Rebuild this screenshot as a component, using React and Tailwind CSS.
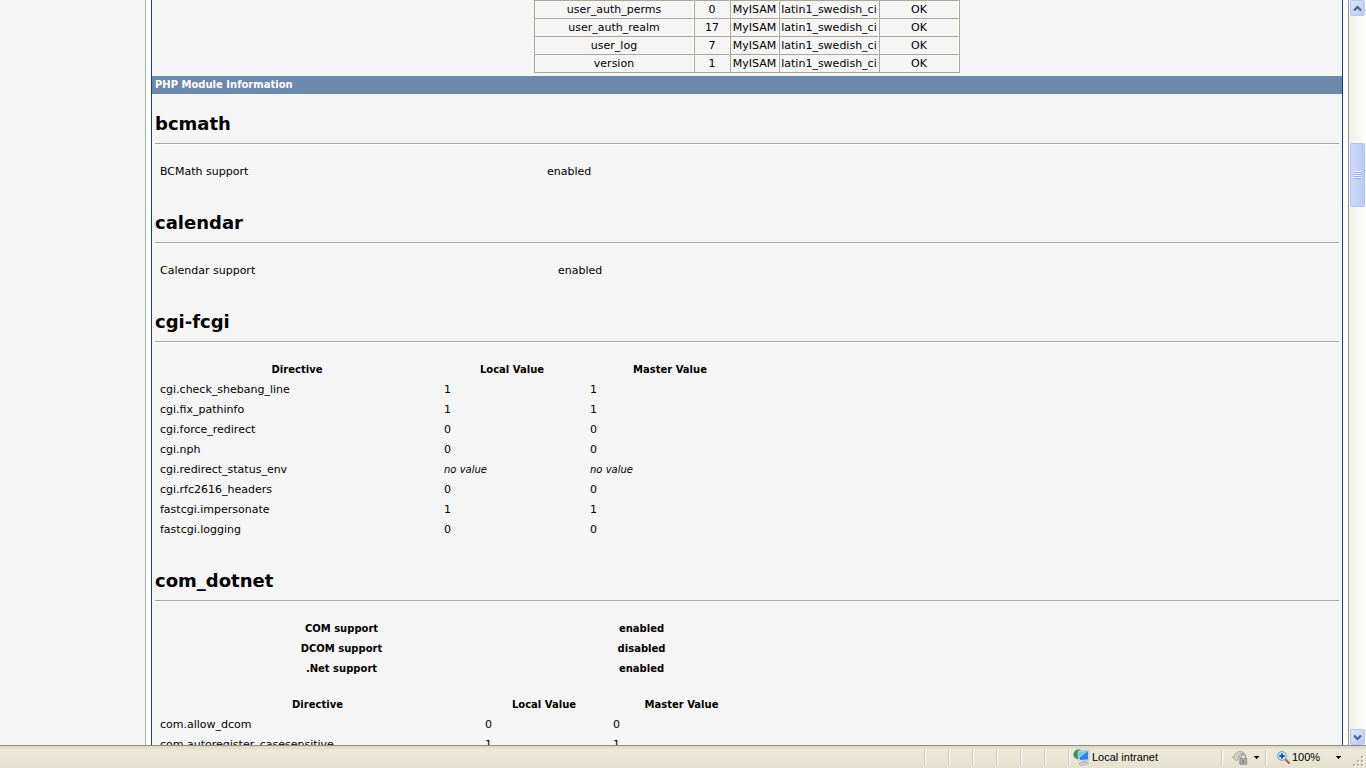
const TABLES = [
  ['user_auth_perms', '0', 'MyISAM', 'latin1_swedish_ci', 'OK'],
  ['user_auth_realm', '17', 'MyISAM', 'latin1_swedish_ci', 'OK'],
  ['user_log', '7', 'MyISAM', 'latin1_swedish_ci', 'OK'],
  ['version', '1', 'MyISAM', 'latin1_swedish_ci', 'OK'],
]

const CGI = [
  ['cgi.check_shebang_line', '1', '1'],
  ['cgi.fix_pathinfo', '1', '1'],
  ['cgi.force_redirect', '0', '0'],
  ['cgi.nph', '0', '0'],
  ['cgi.redirect_status_env', null, null],
  ['cgi.rfc2616_headers', '0', '0'],
  ['fastcgi.impersonate', '1', '1'],
  ['fastcgi.logging', '0', '0'],
]

const COM_SUPPORT = [
  ['COM support', 'enabled'],
  ['DCOM support', 'disabled'],
  ['.Net support', 'enabled'],
]

const COM = [
  ['com.allow_dcom', '0', '0'],
  ['com.autoregister_casesensitive', '1', '1'],
]

function Module({ name, children }) {
  return (
    <section className="px-[3px] pb-[11px]">
      <h2 className="h-[49px] pt-[18px] text-[18px] leading-6 font-bold">{name}</h2>
      <hr className="mb-[17px] border-t border-b border-t-[#a5a5a0] border-b-white" />
      <div className="flex flex-col gap-4">{children}</div>
    </section>
  )
}

function SupportTable({ label, col }) {
  return (
    <table className="w-[600px] table-fixed">
      <tbody>
        <tr className="h-5">
          <td className={`px-[5px] ${col}`}>{label}</td>
          <td className="px-[5px]">enabled</td>
        </tr>
      </tbody>
    </table>
  )
}

function Value({ children }) {
  return <td className="px-[5px]">{children ?? <i className="text-[10px]">no value</i>}</td>
}

function DirectiveTable({ rows, cols }) {
  return (
    <table className="w-[600px] table-fixed">
      <thead className="text-[10px]">
        <tr className="h-5">
          <th className={cols[0]}>Directive</th>
          <th className={cols[1]}>Local Value</th>
          <th>Master Value</th>
        </tr>
      </thead>
      <tbody>
        {rows.map(([name, local, master]) => (
          <tr key={name} className="h-5">
            <td className="px-[5px]">{name}</td>
            <Value>{local}</Value>
            <Value>{master}</Value>
          </tr>
        ))}
      </tbody>
    </table>
  )
}

function ScrollButton({ label, d }) {
  return (
    <button
      aria-label={label}
      className="flex h-4 w-[15px] shrink-0 items-center justify-center rounded-[2px] border border-[#b4c8f0] bg-gradient-to-br from-[#dfe8ff] to-[#b4c8f8]"
    >
      <svg width="9" height="7" viewBox="0 0 9 7" fill="none" stroke="#4d6185" strokeWidth="2.2">
        <path d={d} />
      </svg>
    </button>
  )
}

function ScrollBar() {
  return (
    <div className="flex w-[18px] shrink-0 flex-col items-center border-l border-[#9a9a94] bg-gradient-to-r from-[#f0efe8] to-[#fefefb]">
      <ScrollButton label="Scroll up" d="M1 5.5 4.5 2 8 5.5" />
      <div className="grow-[10]" />
      <button
        aria-label="Scroll position"
        className="flex h-16 w-[15px] shrink-0 flex-col items-center justify-center rounded-[2px] border border-[#b0c4f4] bg-gradient-to-r from-[#cbdaff] to-[#b8cbf8]"
      >
        <span className="h-px w-[7px] bg-[#f4f8ff]" />
        <span className="h-px w-[7px] bg-[#8cb0f8]" />
        <span className="h-px w-[7px] bg-[#f4f8ff]" />
        <span className="h-px w-[7px] bg-[#8cb0f8]" />
        <span className="h-px w-[7px] bg-[#f4f8ff]" />
        <span className="h-px w-[7px] bg-[#8cb0f8]" />
        <span className="h-px w-[7px] bg-[#f4f8ff]" />
        <span className="h-px w-[7px] bg-[#8cb0f8]" />
      </button>
      <div className="grow-[41]" />
      <ScrollButton label="Scroll down" d="M1 1.5 4.5 5 8 1.5" />
    </div>
  )
}

function Caret() {
  return (
    <svg width="5" height="3" viewBox="0 0 5 3" shapeRendering="crispEdges">
      <path d="M0 0h5v1H4v1H3v1H2V2H1V1H0z" fill="#000" />
    </svg>
  )
}

function IntranetIcon() {
  return (
    <svg width="17" height="17" viewBox="0 0 17 17">
      <circle cx="5.5" cy="5.5" r="5" fill="#3f8fd0" />
      <path d="M1 4C2 1 5 0 7 1L6 4 4 5 5 8 3 9C1 8 0 6 1 4z" fill="#2f9a48" />
      <path d="M5 2.200 15 1q1 0 1 1v8.500q0 1-1 1l-8 .5q-1.200 0-1.500-1z" fill="#dfe9f2" stroke="#9fb6cc" strokeWidth=".6" />
      <path d="M6 3.300 15 2.200v8.200l-8 .7z" fill="#2f86e0" />
      <path d="M6 3.300 15 2.200 7 8.500z" fill="#78c8f6" />
      <path d="M9 12h4l1 2-6 1.500z" fill="#b9c2cb" />
      <path d="m6 14.500 8-1.300 1.500 1.300-8 2z" fill="#e4e8ec" stroke="#8793a0" strokeWidth=".6" />
    </svg>
  )
}

function ProtectedIcon() {
  return (
    <svg width="16" height="15" viewBox="0 0 16 15">
      <path d="M2 7C3 2.500 7 .5 11 2L12.500 4C9.500 3 7 4.500 6.200 7L8 7 4.500 11 .5 7z" fill="#d0d0cb" stroke="#999994" strokeWidth=".8" />
      <path d="M9 9V7a2.300 2.300 0 0 1 4.600 0v2" fill="none" stroke="#999" strokeWidth="1.200" />
      <rect x="7.800" y="8.500" width="7" height="5.800" rx=".6" fill="#a8a8a8" stroke="#838383" strokeWidth=".7" />
      <path d="M11.300 10.200v2.400" stroke="#666" strokeWidth="1.200" />
    </svg>
  )
}

function ZoomIcon() {
  return (
    <svg width="13" height="13" viewBox="0 0 13 13">
      <path d="m8 8 4 4" stroke="#a5694a" strokeWidth="2.200" strokeLinecap="round" />
      <circle cx="5" cy="5" r="4.300" fill="#d9edff" stroke="#7fa9d6" strokeWidth="1.200" />
      <path d="M5 2.300v5.400M2.300 5h5.400" stroke="#1550b0" strokeWidth="1.800" />
    </svg>
  )
}

function Grip() {
  return (
    <svg width="12" height="12" viewBox="0 0 12 12" fill="#b8b4a3" shapeRendering="crispEdges">
      <path d="M8 0h2v2H8zM4 4h2v2H4zM8 4h2v2H8zM0 8h2v2H0zM4 8h2v2H4zM8 8h2v2H8z" />
      <path d="M10 1h1v2H9V2h1zM6 5h1v2H5V6h1zM10 5h1v2H9V6h1zM2 9h1v2H1v-1h1zM6 9h1v2H5v-1h1zM10 9h1v2H9v-1h1z" fill="#fff" />
    </svg>
  )
}

function StatusBar() {
  return (
    <footer className="flex h-[23px] shrink-0 justify-end border-t border-[#8f8d80] bg-gradient-to-b from-[#d8d5c4] via-[#ece9d8] via-20% to-[#e4e1cd] pr-px font-['Liberation_Sans',sans-serif] text-[11px] leading-4">
      {[1, 2, 3, 4, 5, 6].map((n) => (
        <div key={n} className="my-[3px] w-6 border-l border-[#cbc7b4] shadow-[inset_1px_0_#fff]" />
      ))}
      <div className="my-[3px] flex w-[153px] items-center gap-[2px] border-l border-[#cbc7b4] pl-1 shadow-[inset_1px_0_#fff]">
        <IntranetIcon />
        Local intranet
      </div>
      <button className="my-[3px] flex w-11 items-center gap-[6px] border-l border-[#cbc7b4] pl-[10px] shadow-[inset_1px_0_#fff]" aria-label="Protected mode">
        <ProtectedIcon />
        <Caret />
      </button>
      <button className="my-[3px] flex w-[84px] items-center gap-[2px] border-l border-[#cbc7b4] pr-2 pl-[11px] shadow-[inset_1px_0_#fff]">
        <ZoomIcon />
        <span className="grow text-left">100%</span>
        <Caret />
      </button>
      <div className="flex w-4 items-end justify-end">
        <Grip />
      </div>
    </footer>
  )
}

export default function App() {
  return (
    <div className="flex h-screen flex-col overflow-hidden bg-[#f5f5f5] font-['DejaVu_Sans',Verdana,sans-serif] text-[11px] leading-4 text-black">
      <div className="flex min-h-0 grow">
        <aside className="w-[146px] shrink-0 border-r border-[#a9b4b0]" />
        <div className="flex min-w-0 grow bg-white px-[5px]">
          <main className="min-w-0 grow overflow-hidden border-x border-[#183c6b] bg-[#f5f5f5]">
            <table className="mx-auto mb-[3px] w-[426px] table-fixed border-separate border-spacing-0 border-r border-b border-[#aca899] text-center">
              <colgroup>
                <col className="w-[160px]" />
                <col className="w-9" />
                <col className="w-[49px]" />
                <col className="w-[100px]" />
                <col />
              </colgroup>
              <tbody>
                {TABLES.map((row) => (
                  <tr key={row[0]} className="h-[18px]">
                    {row.map((cell, i) => (
                      <td key={i} className="border-t border-r border-l border-t-[#aca899] border-r-white border-l-[#aca899] whitespace-nowrap">
                        {cell}
                      </td>
                    ))}
                  </tr>
                ))}
              </tbody>
            </table>
            <h1 className="h-[18px] bg-[#6d88ad] px-[3px] text-[10px] leading-[18px] font-bold text-white">PHP Module Information</h1>

            <Module name="bcmath">
              <SupportTable label="BCMath support" col="w-[387px]" />
            </Module>
            <Module name="calendar">
              <SupportTable label="Calendar support" col="w-[398px]" />
            </Module>
            <Module name="cgi-fcgi">
              <DirectiveTable rows={CGI} cols={['w-[284px]', 'w-[146px]']} />
            </Module>
            <Module name="com_dotnet">
              <table className="w-[600px] table-fixed text-[10px]">
                <tbody>
                  {COM_SUPPORT.map(([name, value]) => (
                    <tr key={name} className="h-5">
                      <th className="w-[373px]">{name}</th>
                      <th>{value}</th>
                    </tr>
                  ))}
                </tbody>
              </table>
              <DirectiveTable rows={COM} cols={['w-[325px]', 'w-[128px]']} />
            </Module>
          </main>
        </div>
        <ScrollBar />
      </div>
      <StatusBar />
    </div>
  )
}
